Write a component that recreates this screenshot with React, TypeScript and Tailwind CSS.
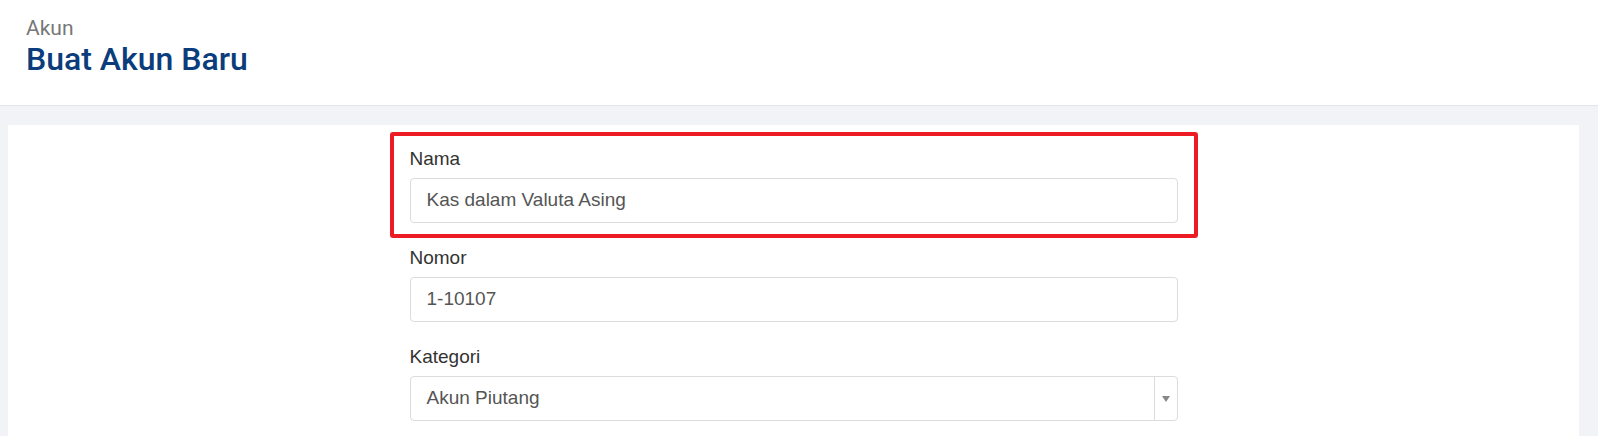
import React from 'react';

const Field: React.FC<{ label: string; value: string; highlight?: boolean; select?: boolean }> = ({ label, value, highlight, select }) => (
  <div className="relative mb-[22px]">
    {highlight && (
      <div className="absolute -left-[20px] -right-[20px] -top-[14px] -bottom-[15px] rounded-[3px] border-[4px] border-[#ed1c24] pointer-events-none" />
    )}
    <label className="block mb-[6px] text-[19px] leading-[26px] text-[#333333]">{label}</label>
    {select ? (
      <div className="flex h-[45px] rounded-[4px] border border-[#dcdcdc] bg-white">
        <div className="flex-1 flex items-center pl-[16px] text-[19px] text-[#555555]">{value}</div>
        <div className="w-[23px] border-l border-[#dcdcdc] flex items-center justify-center">
          <span className="block w-0 h-0 border-l-[4px] border-r-[4px] border-t-[6px] border-l-transparent border-r-transparent border-t-[#888888]" />
        </div>
      </div>
    ) : (
      <div className="flex items-center h-[45px] rounded-[4px] border border-[#dcdcdc] bg-white pl-[16px] text-[19px] text-[#555555]">
        {value}
      </div>
    )}
  </div>
);

const App: React.FC = () => {
  return (
    <div className="min-h-screen bg-[#f2f3f7]">
      <header className="h-[106px] bg-white border-b border-[#e3e5ea] pl-[26px] pt-[17px] font-['Roboto',sans-serif]">
        <div className="text-[21px] leading-[23px] text-[#777777]">Akun</div>
        <h1 className="text-[32px] leading-[38px] font-medium text-[#0b3c7b]">Buat Akun Baru</h1>
      </header>
      <main className="pt-[19px] pl-[8px] pr-[19px]">
        <div className="bg-white h-[320px] pt-[21px] font-['Liberation_Sans',Arial,sans-serif]">
          <form className="w-[768px] mx-auto">
            <Field label="Nama" value="Kas dalam Valuta Asing" highlight />
            <Field label="Nomor" value="1-10107" />
            <Field label="Kategori" value="Akun Piutang" select />
          </form>
        </div>
      </main>
    </div>
  );
};

export default App;
